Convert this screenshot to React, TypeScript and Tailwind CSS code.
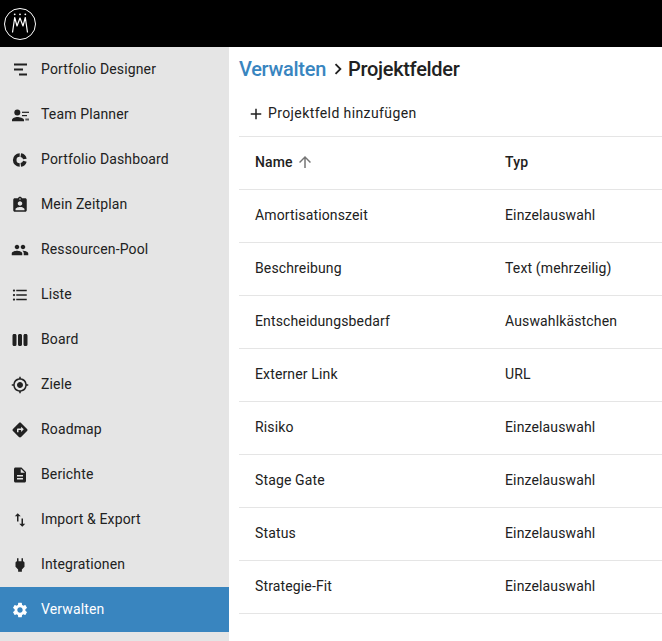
import { MdAssignmentInd, MdPeople, MdFormatListBulleted, MdViewWeek, MdGpsFixed, MdDirections, MdDescription, MdImportExport, MdPower, MdSettings, MdAdd, MdArrowUpward, MdChevronRight } from "react-icons/md";
import type { ReactNode } from "react";

const DesignerIcon = () => (
  <svg width="18" height="18" viewBox="0 0 18 18" fill="currentColor">
    <rect x="3" y="2.500" width="13" height="2" />
    <rect x="3" y="7.500" width="9" height="2" />
    <rect x="8" y="12.500" width="8" height="2" />
  </svg>
);

const TeamIcon = () => (
  <svg width="18" height="18" viewBox="0 0 18 18" fill="currentColor">
    <circle cx="6.300" cy="6.500" r="3" />
    <path d="M1 15.200v-1.300C1 12.300 4.300 11 6.300 11s6.700 1.300 6.700 2.900v1.300H1z" />
    <rect x="11" y="5.700" width="7" height="1.200" />
    <rect x="11" y="9" width="5" height="1.200" />
    <rect x="14.300" y="12.500" width="3.700" height="2" opacity="0.7" />
  </svg>
);

const DashboardIcon = () => (
  <svg width="18" height="18" viewBox="0 0 18 18" fill="none" stroke="currentColor" strokeWidth="3.600">
    <path d="M8.700 4A5 5 0 0 0 8.700 14" />
    <path d="M9.800 4.100A5 5 0 0 1 13.900 8" />
    <path d="M13.900 10.200A5 5 0 0 1 9.800 13.900" />
  </svg>
);

const nav: { label: string; icon: ReactNode; active?: boolean }[] = [
  { label: "Portfolio Designer", icon: <DesignerIcon /> },
  { label: "Team Planner", icon: <TeamIcon /> },
  { label: "Portfolio Dashboard", icon: <DashboardIcon /> },
  { label: "Mein Zeitplan", icon: <MdAssignmentInd size={18} /> },
  { label: "Ressourcen-Pool", icon: <MdPeople size={18} /> },
  { label: "Liste", icon: <MdFormatListBulleted size={18} /> },
  { label: "Board", icon: <MdViewWeek size={18} /> },
  { label: "Ziele", icon: <MdGpsFixed size={18} /> },
  { label: "Roadmap", icon: <MdDirections size={18} /> },
  { label: "Berichte", icon: <MdDescription size={18} /> },
  { label: "Import & Export", icon: <MdImportExport size={18} /> },
  { label: "Integrationen", icon: <MdPower size={18} /> },
  { label: "Verwalten", icon: <MdSettings size={18} />, active: true },
];

const rows = [
  ["Amortisationszeit", "Einzelauswahl"],
  ["Beschreibung", "Text (mehrzeilig)"],
  ["Entscheidungsbedarf", "Auswahlkästchen"],
  ["Externer Link", "URL"],
  ["Risiko", "Einzelauswahl"],
  ["Stage Gate", "Einzelauswahl"],
  ["Status", "Einzelauswahl"],
  ["Strategie-Fit", "Einzelauswahl"],
];

export default function App() {
  return (
    <div className="h-[641px] w-[662px] overflow-hidden bg-white font-['Roboto',sans-serif] text-[14px] tracking-[0.14px] text-[#212121]">
      <header className="flex h-[47px] items-center bg-black pl-[4px]">
        <svg width="32" height="32" viewBox="0 0 32 32" fill="none" stroke="white">
          <circle cx="16" cy="16" r="15.500" strokeWidth="1" />
          <path d="M8.500 24.500L10.700 9.500L13 18L16 10L19 18L21.300 9.500L23.500 24.500" strokeWidth="1.200" strokeLinejoin="round" />
          <g fill="white" stroke="none">
            <circle cx="10.700" cy="6.300" r="0.900" />
            <circle cx="16" cy="6.300" r="0.900" />
            <circle cx="21.300" cy="6.300" r="0.900" />
          </g>
        </svg>
      </header>
      <div className="flex h-[594px]">
        <nav className="h-full w-[229px] shrink-0 bg-[#e5e5e5]">
          {nav.map((item) => (
            <div
              key={item.label}
              className={`flex h-[45px] items-center pl-[11px] ${item.active ? "bg-[#3985bf] text-white" : ""}`}
            >
              <span className={`flex w-[30px] shrink-0 items-center ${item.active ? "text-white" : "text-[#212121]"}`}>{item.icon}</span>
              <span>{item.label}</span>
            </div>
          ))}
        </nav>
        <main className="min-w-0 flex-1 pl-[10px]">
          <div className="flex h-[44px] items-center text-[20px] font-medium tracking-[-0.3px]">
            <span className="text-[#3985bf]">Verwalten</span>
            <MdChevronRight size={22} className="ml-[1px] mr-[-2px]" />
            <span className="ml-[1px]">Projektfelder</span>
          </div>
          <div className="flex h-[45px] items-center pl-[8px] tracking-[0.4px] text-[#212121]">
            <MdAdd size={18} className="mr-[3px]" />
            <span>Projektfeld hinzufügen</span>
          </div>
          <div className="flex h-[54px] items-center border-y border-[#e5e5e5] pb-[2px] font-medium">
            <div className="flex w-[266px] items-center pl-[16px]">
              Name
              <MdArrowUpward size={18} className="ml-[3px] text-[#757575]" />
            </div>
            <div>Typ</div>
          </div>
          {rows.map(([name, type]) => (
            <div key={name} className="flex h-[53px] items-center border-b border-[#e5e5e5] pb-[2px]">
              <div className="w-[266px] pl-[16px]">{name}</div>
              <div>{type}</div>
            </div>
          ))}
        </main>
      </div>
    </div>
  );
}
